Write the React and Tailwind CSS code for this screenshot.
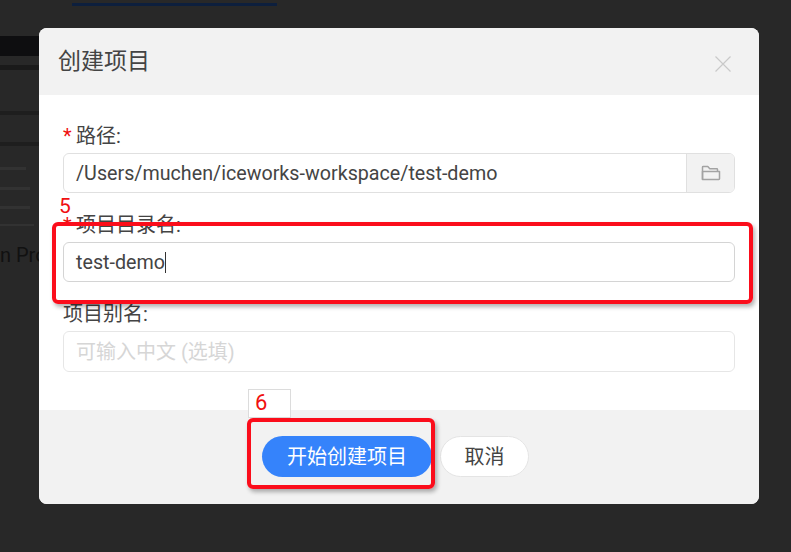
import React from "react";

function Label({ required, children, className = "" }) {
  return (
    <div className={`flex items-center h-[22px] text-[20px] leading-[22px] text-[#444] ${className}`}>
      {required && <span className="text-[#f01010] w-[13px] text-[20px]">*</span>}
      <span>{children}</span>
    </div>
  );
}

function FolderIcon() {
  return (
    <svg width="20" height="16" viewBox="0 0 20 16" fill="none" stroke="#a3a3a3" strokeWidth="1.5" strokeLinejoin="round">
      <path d="M1.5 14.5V2.2c0-.4.3-.7.7-.7h4.6l2 2.2h7c.4 0 .7.3.7.7v2.1" />
      <path d="M1.5 6.5h17v7.3c0 .4-.3.7-.7.7H1.5z" />
    </svg>
  );
}

// what can be seen of the page behind the dialog
function PageBehind() {
  return (
    <div className="w-[39px] shrink-0 pt-[36px] flex flex-col items-start">
      <div className="w-full h-[20px] bg-[#0e0e10]" />
      <div className="w-full h-[5px] mt-[9px] bg-[#1a1a1a]" />
      <div className="w-full h-[4px] mt-[41px] bg-[#1e1e1e]" />
      <div className="w-full h-[4px] mt-[27px] bg-[#1e1e1e]" />
      <div className="w-[26px] h-[3px] mt-[21px] bg-[#323232]" />
      <div className="w-[30px] h-[3px] mt-[17px] bg-[#323232]" />
      <div className="w-[30px] h-[3px] mt-[16px] bg-[#323232]" />
      <div className="w-[34px] h-[2px] mt-[15px] bg-[#323232]" />
      <div className="w-full mt-[18px] overflow-hidden whitespace-nowrap text-[20px] leading-[22px] text-[#111]">
        n Pro
      </div>
    </div>
  );
}

export default function App() {
  return (
    <div className="flex w-[791px] h-[552px] overflow-hidden bg-[#282828] font-['Roboto','Noto_Sans_CJK_SC',sans-serif]">
      <PageBehind />

      <div className="w-[720px] shrink-0 flex flex-col">
        <div className="h-[28px] pt-[3px] pl-[33px]">
          <div className="w-[205px] h-[3px] bg-[#0d1f3d]" />
        </div>

        <div className="relative h-[476px] rounded-[8px] bg-white overflow-hidden flex flex-col">
          <div className="h-[67px] bg-[#f2f2f2] flex items-center justify-between pl-[19px] pr-[28px]">
            <span className="text-[23px] text-[#444] leading-[30px]">创建项目</span>
            <svg width="16" height="16" viewBox="0 0 16 16" stroke="#c9c9c9" strokeWidth="1.2" className="mt-[4px]">
              <path d="M0.5 0.5 15.5 15.5M15.5 0.5 0.5 15.5" />
            </svg>
          </div>

          <div className="h-[315px] px-[24px] pt-[30px]">
            <Label required>路径:</Label>
            <div className="mt-[6px] h-[40px] flex rounded-[6px] border border-[#e0e0e0] overflow-hidden">
              <div className="flex-1 pl-[12px] pt-[1px] flex items-center text-[19.7px] text-[#444]">
                /Users/muchen/iceworks-workspace/test-demo
              </div>
              <div className="w-[48px] bg-[#f2f2f2] border-l border-[#e0e0e0] flex items-center justify-center">
                <FolderIcon />
              </div>
            </div>

            <Label required className="mt-[21px]">项目目录名:</Label>
            <div className="mt-[6px] h-[40px] rounded-[6px] border border-[#d4d4d4] pl-[12px] pt-[1px] flex items-center text-[19.7px] text-[#444]">
              test-demo
              <span className="w-[1px] h-[21px] bg-[#333]" />
            </div>

            <Label className="mt-[21px]">项目别名:</Label>
            <div className="mt-[6px] h-[41px] rounded-[6px] border border-[#e6e6e6] pl-[12px] pt-[1px] flex items-center text-[20px] text-[#d6d6d6]">
              可输入中文 (选填)
            </div>
          </div>

          <div className="flex-1 bg-[#f2f2f2] pl-[223px] pt-[26px] flex gap-[8px]">
            <div className="w-[170px] h-[41px] rounded-full bg-[#3583fb] text-white text-[20px] flex items-center justify-center">
              开始创建项目
            </div>
            <div className="w-[89px] h-[41px] rounded-full bg-white border border-[#e4e4e4] text-[#444] text-[20px] flex items-center justify-center">
              取消
            </div>
          </div>

          {/* annotations drawn over the screenshot */}
          <span className="absolute left-[20px] top-[166px] text-[21px] leading-[24px] text-[#f01010]">5</span>
          <div className="absolute left-[13px] top-[194px] w-[701px] h-[82px] rounded-[6px] border-[4px] border-[#fb0d1b] shadow-[2px_3px_4px_rgba(0,0,0,0.3)]" />
          <div className="absolute left-[209px] top-[361px] w-[43px] h-[29px] border border-[#dcdcdc] bg-white pl-[6px] text-[22px] leading-[26px] text-[#f01010]">
            6
          </div>
          <div className="absolute left-[208px] top-[390px] w-[188px] h-[71px] rounded-[6px] border-[4px] border-[#fb0d1b] shadow-[2px_3px_4px_rgba(0,0,0,0.3)]" />
        </div>
      </div>
    </div>
  );
}
